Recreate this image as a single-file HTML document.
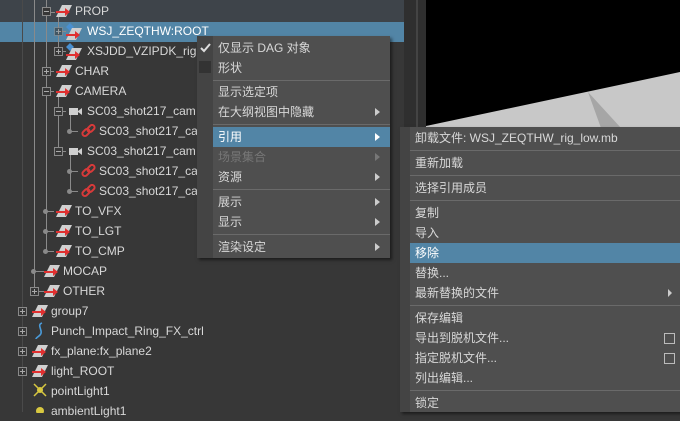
<!DOCTYPE html>
<html><head><meta charset="utf-8"><style>
*{margin:0;padding:0;box-sizing:border-box}
body{width:680px;height:412px;overflow:hidden;background:#373737;font-family:"Liberation Sans","Noto Sans CJK SC",sans-serif;font-size:12px;color:#d8d8d8;position:relative}
.a{position:absolute;white-space:nowrap}
.t{position:absolute;line-height:20px;height:20px}
.vl{position:absolute;width:1px;background:#8a8a8a}
.hl{position:absolute;height:1px;background:#8a8a8a}
.bx{position:absolute;width:9px;height:9px;border:1px solid #8a8a8a;background:#373737}
.bx:before{content:"";position:absolute;left:1px;top:3px;width:5px;height:1px;background:#aaa}
.bx.p:after{content:"";position:absolute;left:3px;top:1px;width:1px;height:5px;background:#aaa}
.dot{position:absolute;width:5px;height:5px;border-radius:50%;background:#8a8a8a}
.m{position:absolute;background:#4f4f4f;box-shadow:2px 2px 3px rgba(0,0,0,.5)}
.mi{position:absolute;left:0;right:0;height:20px;line-height:20px}
.sep{position:absolute;height:1px;background:#6a6a6a}
.arr{position:absolute;width:0;height:0;border-top:4px solid transparent;border-bottom:4px solid transparent;border-left:5px solid #ccc}
.cb{position:absolute;width:11px;height:11px;border:1px solid #bbb}
</style></head><body>
<!-- outliner rows -->
<div class="a" style="left:0;top:0;width:404px;height:22px;background:#3e444a"></div>
<div class="a" style="left:0;top:22px;width:404px;height:20px;background:#5285a6"></div>
<div class="a" style="left:404px;top:0;width:22px;height:412px;background:#2f2f2f"></div>
<div class="a" style="left:416px;top:0;width:2px;height:412px;background:#444"></div>
<div class="a" style="left:426px;top:0;width:254px;height:130px;background:#000"></div>
<svg class="a" style="left:426px;top:0" width="254" height="130"><polygon points="0,126 254,72 254,130 0,130" fill="#c8c8c8"/><polygon points="162,92 195,128 175,128" fill="#a6a6a6"/></svg>

<!-- tree lines -->
<div class="vl" style="left:22px;top:0;height:412px;background:#4a4a4a"></div>
<div class="vl" style="left:34px;top:0;height:291px"></div>
<div class="hl" style="left:34px;top:271px;width:10px"></div>
<div class="hl" style="left:34px;top:291px;width:10px"></div>
<div class="vl" style="left:46px;top:0;height:251px"></div>
<div class="vl" style="left:58px;top:12px;height:40px"></div>
<div class="vl" style="left:58px;top:92px;height:60px"></div>
<div class="vl" style="left:70px;top:112px;height:20px"></div>
<div class="vl" style="left:70px;top:152px;height:40px"></div>

<!-- icons helper -->
<svg width="0" height="0" style="position:absolute"><defs>
<g id="grp"><polygon points="6,1 16,1 10,13 0,13" fill="#d0d0d0"/><path d="M0,8 H10" stroke="#e03030" stroke-width="2"/><polygon points="9,4 14,8 9,12" fill="#e03030"/></g>
<g id="lnk"><rect x="1" y="6" width="8" height="5" rx="2.5" transform="rotate(-45 5 8.5)" fill="none" stroke="#d83a3a" stroke-width="2"/><rect x="6" y="2" width="8" height="5" rx="2.5" transform="rotate(-45 10 4.5)" fill="none" stroke="#d83a3a" stroke-width="2"/></g>
<g id="cam"><rect x="0" y="3" width="9" height="7" fill="#d0d0d0"/><polygon points="9,6 13,3 13,10 9,7" fill="#d0d0d0"/></g>
</defs></svg>

<!-- row: PROP -->
<div class="bx" style="left:42px;top:7px"></div><div class="hl" style="left:51px;top:12px;width:4px"></div>
<svg class="a" style="left:56px;top:4px" width="17" height="14"><use href="#grp"/></svg><div class="t" style="left:75px;top:1px">PROP</div>
<!-- WSJ -->
<div class="hl" style="left:58px;top:31px;width:8px"></div><div class="bx p" style="left:54px;top:27px;opacity:.6"></div>
<svg class="a" style="left:66px;top:23px" width="18" height="18"><polygon points="4,0 8,4 4,8 0,4" fill="#4a90d0"/><use href="#grp" y="4"/></svg><div class="t" style="left:87px;top:21px;color:#fff">WSJ_ZEQTHW:ROOT</div>
<!-- XSJDD -->
<div class="hl" style="left:58px;top:51px;width:8px"></div><div class="bx p" style="left:54px;top:47px"></div>
<svg class="a" style="left:66px;top:43px" width="18" height="18"><polygon points="4,0 8,4 4,8 0,4" fill="#4a90d0"/><use href="#grp" y="4"/></svg><div class="t" style="left:87px;top:41px">XSJDD_VZIPDK_rig</div>
<!-- CHAR -->
<div class="hl" style="left:46px;top:71px;width:8px"></div><div class="bx p" style="left:42px;top:67px"></div>
<svg class="a" style="left:56px;top:64px" width="17" height="14"><use href="#grp"/></svg><div class="t" style="left:75px;top:61px">CHAR</div>
<!-- CAMERA -->
<div class="hl" style="left:46px;top:91px;width:8px"></div><div class="bx" style="left:42px;top:87px"></div>
<svg class="a" style="left:56px;top:84px" width="17" height="14"><use href="#grp"/></svg><div class="t" style="left:75px;top:81px">CAMERA</div>
<!-- cam1 -->
<div class="hl" style="left:58px;top:111px;width:8px"></div><div class="bx" style="left:54px;top:107px"></div>
<svg class="a" style="left:69px;top:105px" width="14" height="13"><use href="#cam"/></svg><div class="t" style="left:87px;top:101px">SC03_shot217_cam</div>
<div class="hl" style="left:70px;top:131px;width:8px"></div><div class="dot" style="left:67px;top:129px"></div>
<svg class="a" style="left:81px;top:124px" width="15" height="14"><use href="#lnk"/></svg><div class="t" style="left:99px;top:121px">SC03_shot217_ca</div>
<!-- cam2 -->
<div class="hl" style="left:58px;top:151px;width:8px"></div><div class="bx" style="left:54px;top:147px"></div>
<svg class="a" style="left:69px;top:145px" width="14" height="13"><use href="#cam"/></svg><div class="t" style="left:87px;top:141px">SC03_shot217_cam</div>
<div class="hl" style="left:70px;top:171px;width:8px"></div><div class="dot" style="left:67px;top:169px"></div>
<svg class="a" style="left:81px;top:164px" width="15" height="14"><use href="#lnk"/></svg><div class="t" style="left:99px;top:161px">SC03_shot217_ca</div>
<div class="hl" style="left:70px;top:191px;width:8px"></div><div class="dot" style="left:67px;top:189px"></div>
<svg class="a" style="left:81px;top:184px" width="15" height="14"><use href="#lnk"/></svg><div class="t" style="left:99px;top:181px">SC03_shot217_ca</div>
<!-- TO_ -->
<div class="hl" style="left:46px;top:211px;width:8px"></div><div class="dot" style="left:43px;top:209px"></div>
<svg class="a" style="left:56px;top:204px" width="17" height="14"><use href="#grp"/></svg><div class="t" style="left:75px;top:201px">TO_VFX</div>
<div class="hl" style="left:46px;top:231px;width:8px"></div><div class="dot" style="left:43px;top:229px"></div>
<svg class="a" style="left:56px;top:224px" width="17" height="14"><use href="#grp"/></svg><div class="t" style="left:75px;top:221px">TO_LGT</div>
<div class="hl" style="left:46px;top:251px;width:8px"></div><div class="dot" style="left:43px;top:249px"></div>
<svg class="a" style="left:56px;top:244px" width="17" height="14"><use href="#grp"/></svg><div class="t" style="left:75px;top:241px">TO_CMP</div>
<div class="dot" style="left:31px;top:269px"></div>
<svg class="a" style="left:44px;top:264px" width="17" height="14"><use href="#grp"/></svg><div class="t" style="left:63px;top:261px">MOCAP</div>
<div class="bx p" style="left:30px;top:287px"></div>
<svg class="a" style="left:44px;top:284px" width="17" height="14"><use href="#grp"/></svg><div class="t" style="left:63px;top:281px">OTHER</div>
<!-- top-level -->
<div class="bx p" style="left:18px;top:307px"></div>
<svg class="a" style="left:32px;top:304px" width="17" height="14"><use href="#grp"/></svg><div class="t" style="left:51px;top:301px">group7</div>
<div class="bx p" style="left:18px;top:327px"></div>
<svg class="a" style="left:34px;top:321px" width="12" height="20"><path d="M8,2 C2,4 10,10 6,14 C4,16 2,17 2,18" stroke="#4a9ad8" stroke-width="1.6" fill="none"/></svg><div class="t" style="left:51px;top:321px">Punch_Impact_Ring_FX_ctrl</div>
<div class="bx p" style="left:18px;top:347px"></div>
<svg class="a" style="left:32px;top:344px" width="17" height="14"><use href="#grp"/></svg><div class="t" style="left:51px;top:341px">fx_plane:fx_plane2</div>
<div class="bx p" style="left:18px;top:367px"></div>
<svg class="a" style="left:32px;top:364px" width="17" height="14"><use href="#grp"/></svg><div class="t" style="left:51px;top:361px">light_ROOT</div>
<svg class="a" style="left:33px;top:383px" width="14" height="14"><path d="M1,1 L13,13 M13,1 L1,13" stroke="#d8c840" stroke-width="1.5"/><circle cx="7" cy="7" r="3" fill="#d8c840"/></svg><div class="t" style="left:51px;top:381px">pointLight1</div>
<svg class="a" style="left:33px;top:403px" width="14" height="10"><circle cx="7" cy="8" r="4" fill="#d8c840"/></svg><div class="t" style="left:51px;top:401px">ambientLight1</div>

<!-- menu 1 -->
<div class="m" style="left:197px;top:36px;width:193px;height:222px">
 <div class="a" style="left:0;top:0;width:16px;height:222px;background:#444"></div>
 <svg class="a" style="left:3px;top:6px" width="12" height="12"><path d="M1,6 L4,9 L10,2" stroke="#ddd" stroke-width="2" fill="none"/></svg>
 <div class="a" style="left:2px;top:25px;width:12px;height:12px;background:#333"></div>
 <div class="mi" style="top:2px;padding-left:21px">仅显示 DAG 对象</div>
 <div class="mi" style="top:22px;padding-left:21px">形状</div>
 <div class="sep" style="left:16px;right:0;top:44px"></div>
 <div class="mi" style="top:46px;padding-left:21px">显示选定项</div>
 <div class="mi" style="top:66px;padding-left:21px">在大纲视图中隐藏</div><div class="arr" style="left:178px;top:72px"></div>
 <div class="sep" style="left:16px;right:0;top:88px"></div>
 <div class="mi" style="top:91px;left:16px;padding-left:5px;background:#5285a6;color:#fff">引用</div><div class="arr" style="left:178px;top:97px;border-left-color:#fff"></div>
 <div class="mi" style="top:111px;padding-left:21px;color:#777">场景集合</div><div class="arr" style="left:178px;top:117px;border-left-color:#777"></div>
 <div class="mi" style="top:131px;padding-left:21px">资源</div><div class="arr" style="left:178px;top:137px"></div>
 <div class="sep" style="left:16px;right:0;top:153px"></div>
 <div class="mi" style="top:156px;padding-left:21px">展示</div><div class="arr" style="left:178px;top:162px"></div>
 <div class="mi" style="top:176px;padding-left:21px">显示</div><div class="arr" style="left:178px;top:182px"></div>
 <div class="sep" style="left:16px;right:0;top:198px"></div>
 <div class="mi" style="top:201px;padding-left:21px">渲染设定</div><div class="arr" style="left:178px;top:207px"></div>
</div>

<!-- menu 2 -->
<div class="m" style="left:400px;top:127px;width:280px;height:285px">
 <div class="a" style="left:0;top:0;width:10px;height:285px;background:#444"></div>
 <div class="mi" style="top:1px;padding-left:15px">卸载文件: WSJ_ZEQTHW_rig_low.mb</div>
 <div class="sep" style="left:10px;right:0;top:23px"></div>
 <div class="mi" style="top:26px;padding-left:15px">重新加载</div>
 <div class="sep" style="left:10px;right:0;top:48px"></div>
 <div class="mi" style="top:51px;padding-left:15px">选择引用成员</div>
 <div class="sep" style="left:10px;right:0;top:73px"></div>
 <div class="mi" style="top:76px;padding-left:15px">复制</div>
 <div class="mi" style="top:96px;padding-left:15px">导入</div>
 <div class="mi" style="top:116px;left:10px;padding-left:5px;background:#5285a6;color:#fff">移除</div>
 <div class="mi" style="top:136px;padding-left:15px">替换...</div>
 <div class="mi" style="top:156px;padding-left:15px">最新替换的文件</div><div class="arr" style="left:268px;top:162px;border-left-width:4px"></div>
 <div class="sep" style="left:10px;right:0;top:178px"></div>
 <div class="mi" style="top:181px;padding-left:15px">保存编辑</div>
 <div class="mi" style="top:201px;padding-left:15px">导出到脱机文件...</div><div class="cb" style="left:264px;top:206px"></div>
 <div class="mi" style="top:221px;padding-left:15px">指定脱机文件...</div><div class="cb" style="left:264px;top:226px"></div>
 <div class="mi" style="top:241px;padding-left:15px">列出编辑...</div>
 <div class="sep" style="left:10px;right:0;top:263px"></div>
 <div class="mi" style="top:266px;padding-left:15px">锁定</div>
</div>
</body></html>
